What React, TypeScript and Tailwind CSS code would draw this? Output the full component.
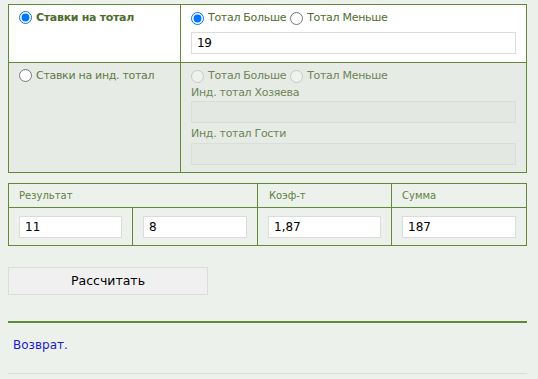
import React from "react";

const font = { fontFamily: '"DejaVu Sans", Verdana, sans-serif' };

function Radio({ checked, disabled, name }: { checked?: boolean; disabled?: boolean; name: string }) {
  return (
    <input
      type="radio"
      name={name}
      defaultChecked={checked}
      disabled={disabled}
      className="m-0 h-[13px] w-[13px] shrink-0 align-middle"
    />
  );
}

function Field({ value, disabled }: { value?: string; disabled?: boolean }) {
  return (
    <input
      type="text"
      defaultValue={value}
      disabled={disabled}
      className={
        "block h-[22px] w-full border px-[5px] text-[12px] text-black outline-none " +
        (disabled ? "border-[#d9ded8] bg-[#e3e8e2]" : "border-[#dcdcdc] bg-white")
      }
      style={font}
    />
  );
}

export default function App() {
  return (
    <div className="min-h-[379px] bg-[#edf1ec] pt-[4px]" style={font}>
      {/* тип ставки */}
      <div className="mx-[8px] w-[519px] border border-[#62883a] text-[11px] leading-[14px] tracking-[-0.3px]">
        <div className="grid grid-cols-[172px_1fr] bg-white">
          <div className="flex items-start gap-[4px] border-r border-[#62883a] pl-[10px] pt-[6px]">
            <Radio name="type" checked />
            <span className="font-bold text-[#4f6d2e]">Ставки на тотал</span>
          </div>
          <div className="px-[10px] pt-[6px] pb-[8px]">
            <div className="flex items-center gap-[4px] text-[#4f6d2e]">
              <Radio name="t1" checked />
              <span>Тотал Больше</span>
              <Radio name="t1" />
              <span>Тотал Меньше</span>
            </div>
            <div className="mt-[7px]">
              <Field value="19" />
            </div>
          </div>
        </div>
        <div className="grid grid-cols-[172px_1fr] border-t border-[#62883a] bg-[#e6ebe5]">
          <div className="flex items-start gap-[4px] border-r border-[#62883a] pl-[10px] pt-[6px]">
            <Radio name="type" />
            <span className="text-[#5f7a44]">Ставки на инд. тотал</span>
          </div>
          <div className="px-[10px] pt-[6px] pb-[7px] text-[#6f8457]">
            <div className="flex items-center gap-[4px]">
              <Radio name="t2" disabled />
              <span>Тотал Больше</span>
              <Radio name="t2" disabled />
              <span>Тотал Меньше</span>
            </div>
            <div className="mt-[3px]">Инд. тотал Хозяева</div>
            <div className="mt-[1px]">
              <Field disabled />
            </div>
            <div className="mt-[4px]">Инд. тотал Гости</div>
            <div className="mt-[2px]">
              <Field disabled />
            </div>
          </div>
        </div>
      </div>

      {/* результат */}
      <div className="mx-[8px] mt-[10px] grid w-[519px] grid-cols-[124px_125px_134px_1fr] border border-[#62883a] text-[10px] leading-[13px] text-[#5f8040]">
        <div className="col-span-2 border-r border-b border-[#62883a] px-[10px] py-[5px]">Результат</div>
        <div className="border-r border-b border-[#62883a] px-[11px] py-[5px]">Коэф-т</div>
        <div className="border-b border-[#62883a] px-[10px] py-[5px]">Сумма</div>
        <div className="border-r border-[#62883a] px-[10px] pt-[8px] pb-[7px]">
          <Field value="11" />
        </div>
        <div className="border-r border-[#62883a] px-[10px] pt-[8px] pb-[7px]">
          <Field value="8" />
        </div>
        <div className="border-r border-[#62883a] px-[10px] pt-[8px] pb-[7px]">
          <Field value="1,87" />
        </div>
        <div className="px-[10px] pt-[8px] pb-[7px]">
          <Field value="187" />
        </div>
      </div>

      <div className="mx-[8px] mt-[21px]">
        <button
          type="button"
          className="h-[28px] w-[200px] border border-[#dcdcdc] bg-[#f0f0f0] text-[12.5px] text-black"
          style={font}
        >
          Рассчитать
        </button>
      </div>

      <div className="mx-[8px] mt-[26px] w-[519px] border-t-2 border-[#62883a]" />
      <div className="mx-[8px] px-[5px] pt-[15px] pb-[21px] text-[12px] leading-[14px] text-[#1a1ad0]">Возврат.</div>
      <div className="mx-[8px] w-[519px] border-t border-[#dcdcdc]" />
    </div>
  );
}
